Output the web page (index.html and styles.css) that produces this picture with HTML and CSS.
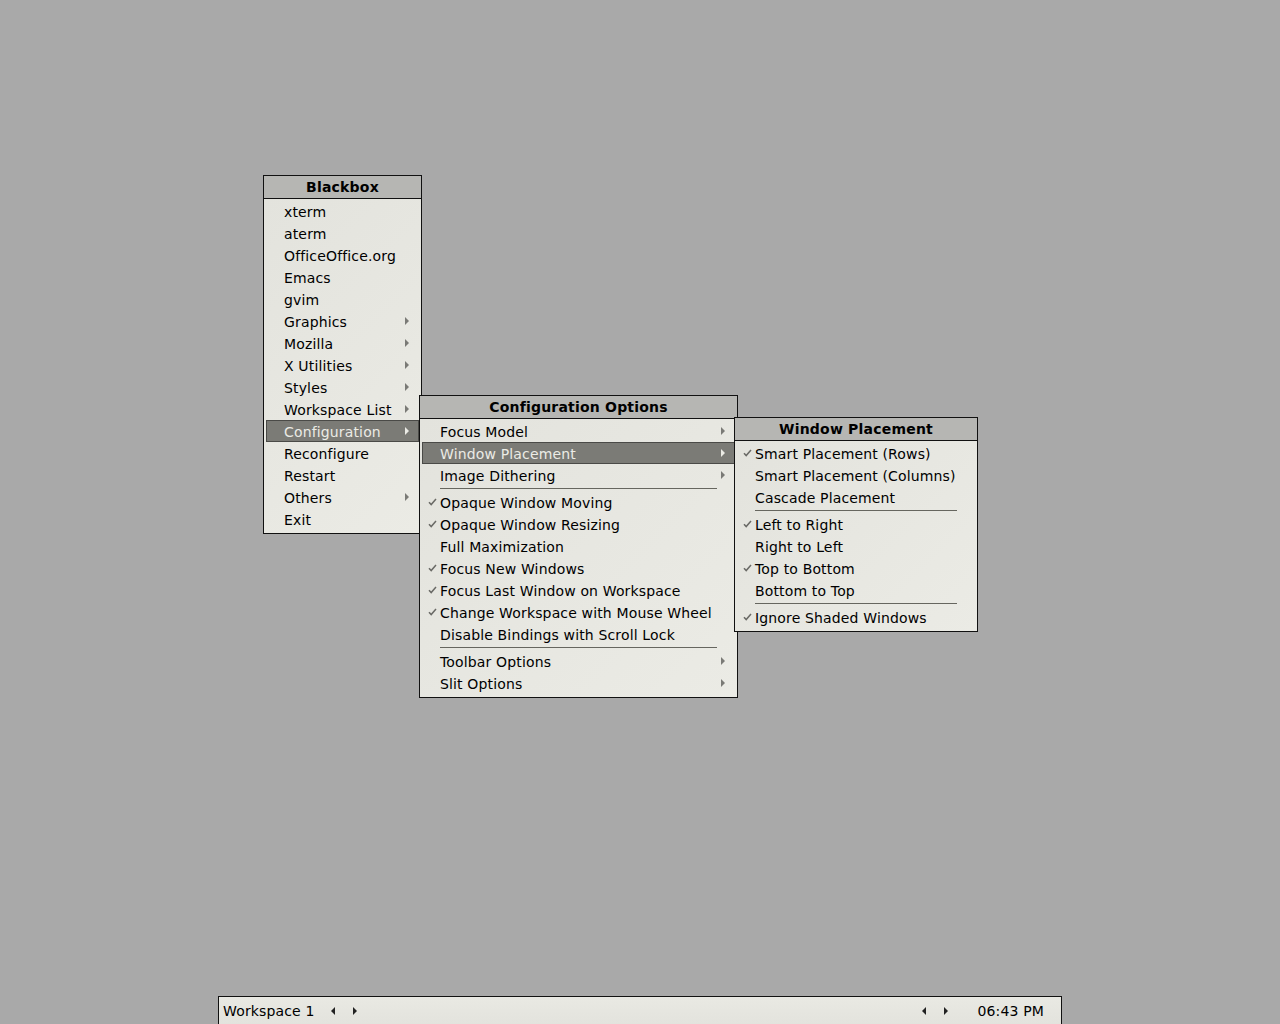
FILE: index.html
```html
<!DOCTYPE html>
<html>
<head>
<meta charset="utf-8">
<link rel="stylesheet" href="styles.css">
</head>
<body>
<div class="desktop">
  <div class="menu menu-root">
    <div class="menu-title">Blackbox</div>
    <div class="menu-body">
      <div class="item"><span class="label">xterm</span></div>
      <div class="item"><span class="label">aterm</span></div>
      <div class="item"><span class="label">OfficeOffice.org</span></div>
      <div class="item"><span class="label">Emacs</span></div>
      <div class="item"><span class="label">gvim</span></div>
      <div class="item sub"><span class="label">Graphics</span><span class="arrow"></span></div>
      <div class="item sub"><span class="label">Mozilla</span><span class="arrow"></span></div>
      <div class="item sub"><span class="label">X Utilities</span><span class="arrow"></span></div>
      <div class="item sub"><span class="label">Styles</span><span class="arrow"></span></div>
      <div class="item sub"><span class="label">Workspace List</span><span class="arrow"></span></div>
      <div class="item sub active"><span class="label">Configuration</span><span class="arrow"></span></div>
      <div class="item"><span class="label">Reconfigure</span></div>
      <div class="item"><span class="label">Restart</span></div>
      <div class="item sub"><span class="label">Others</span><span class="arrow"></span></div>
      <div class="item"><span class="label">Exit</span></div>
    </div>
  </div>

  <div class="menu menu-config">
    <div class="menu-title">Configuration Options</div>
    <div class="menu-body">
      <div class="item sub"><span class="label">Focus Model</span><span class="arrow"></span></div>
      <div class="item sub active"><span class="label">Window Placement</span><span class="arrow"></span></div>
      <div class="item sub"><span class="label">Image Dithering</span><span class="arrow"></span></div>
      <div class="sep"></div>
      <div class="item checked"><span class="check"><svg width="9" height="8" viewBox="0 0 9 8"><path d="M1 4.2 L3.2 6.6 L8 1" fill="none" stroke="#6a6a66" stroke-width="1.5"/></svg></span><span class="label">Opaque Window Moving</span></div>
      <div class="item checked"><span class="check"><svg width="9" height="8" viewBox="0 0 9 8"><path d="M1 4.2 L3.2 6.6 L8 1" fill="none" stroke="#6a6a66" stroke-width="1.5"/></svg></span><span class="label">Opaque Window Resizing</span></div>
      <div class="item"><span class="label">Full Maximization</span></div>
      <div class="item checked"><span class="check"><svg width="9" height="8" viewBox="0 0 9 8"><path d="M1 4.2 L3.2 6.6 L8 1" fill="none" stroke="#6a6a66" stroke-width="1.5"/></svg></span><span class="label">Focus New Windows</span></div>
      <div class="item checked"><span class="check"><svg width="9" height="8" viewBox="0 0 9 8"><path d="M1 4.2 L3.2 6.6 L8 1" fill="none" stroke="#6a6a66" stroke-width="1.5"/></svg></span><span class="label">Focus Last Window on Workspace</span></div>
      <div class="item checked"><span class="check"><svg width="9" height="8" viewBox="0 0 9 8"><path d="M1 4.2 L3.2 6.6 L8 1" fill="none" stroke="#6a6a66" stroke-width="1.5"/></svg></span><span class="label">Change Workspace with Mouse Wheel</span></div>
      <div class="item"><span class="label">Disable Bindings with Scroll Lock</span></div>
      <div class="sep"></div>
      <div class="item sub"><span class="label">Toolbar Options</span><span class="arrow"></span></div>
      <div class="item sub"><span class="label">Slit Options</span><span class="arrow"></span></div>
    </div>
  </div>

  <div class="menu menu-placement">
    <div class="menu-title">Window Placement</div>
    <div class="menu-body">
      <div class="item checked"><span class="check"><svg width="9" height="8" viewBox="0 0 9 8"><path d="M1 4.2 L3.2 6.6 L8 1" fill="none" stroke="#6a6a66" stroke-width="1.5"/></svg></span><span class="label">Smart Placement (Rows)</span></div>
      <div class="item"><span class="label">Smart Placement (Columns)</span></div>
      <div class="item"><span class="label">Cascade Placement</span></div>
      <div class="sep"></div>
      <div class="item checked"><span class="check"><svg width="9" height="8" viewBox="0 0 9 8"><path d="M1 4.2 L3.2 6.6 L8 1" fill="none" stroke="#6a6a66" stroke-width="1.5"/></svg></span><span class="label">Left to Right</span></div>
      <div class="item"><span class="label">Right to Left</span></div>
      <div class="item checked"><span class="check"><svg width="9" height="8" viewBox="0 0 9 8"><path d="M1 4.2 L3.2 6.6 L8 1" fill="none" stroke="#6a6a66" stroke-width="1.5"/></svg></span><span class="label">Top to Bottom</span></div>
      <div class="item"><span class="label">Bottom to Top</span></div>
      <div class="sep"></div>
      <div class="item checked"><span class="check"><svg width="9" height="8" viewBox="0 0 9 8"><path d="M1 4.2 L3.2 6.6 L8 1" fill="none" stroke="#6a6a66" stroke-width="1.5"/></svg></span><span class="label">Ignore Shaded Windows</span></div>
    </div>
  </div>

  <div class="toolbar">
    <span class="ws-name">Workspace 1</span>
    <span class="tb-btn"><span class="tri-left"></span></span>
    <span class="tb-btn"><span class="tri-right"></span></span>
    <span class="tb-spacer"></span>
    <span class="tb-btn"><span class="tri-left"></span></span>
    <span class="tb-btn"><span class="tri-right"></span></span>
    <span class="clock">06:43 PM</span>
  </div>
</div>
</body>
</html>
```

FILE: styles.css
```css
html, body {
  margin: 0;
  padding: 0;
}

body {
  background: #a9a9a9;
  font-family: "DejaVu Sans", "Liberation Sans", sans-serif;
  font-size: 14px;
  letter-spacing: 0.15px;
  color: #000;
}

.desktop {
  position: relative;
  width: 1280px;
  height: 1024px;
  overflow: hidden;
}

.menu {
  position: absolute;
  box-sizing: border-box;
  border: 1px solid #111;
  background: #e7e7e1;
}

.menu-root { left: 263px; top: 175px; width: 159px; z-index: 1; }
.menu-config { left: 419px; top: 395px; width: 319px; z-index: 2; }
.menu-placement { left: 734px; top: 417px; width: 244px; z-index: 3; }

.menu-title {
  height: 22px;
  line-height: 23px;
  border-bottom: 1px solid #111;
  background: #b6b6b3;
  font-weight: bold;
  letter-spacing: 0.2px;
  text-align: center;
}

.menu-body {
  padding: 1px 2px 3px 2px;
  background: linear-gradient(135deg, #e3e3dd 0%, #ebebe5 100%);
}

.item {
  position: relative;
  display: flex;
  align-items: center;
  height: 22px;
  padding-left: 18px;
  padding-right: 10px;
  box-sizing: border-box;
  white-space: nowrap;
}

.item .label {
  flex: 1;
  line-height: 24px;
  height: 22px;
}

.item.active {
  background: #7b7b76;
  box-shadow: inset 0 0 0 1px #4a4a47;
  color: #ebebe5;
}

.check {
  position: absolute;
  left: 6px;
  top: 7px;
  width: 9px;
  height: 8px;
  line-height: 0;
}

.arrow {
  width: 0;
  height: 0;
  border-top: 4px solid transparent;
  border-bottom: 4px solid transparent;
  border-left: 4px solid #7a7a76;
}

.item.active .arrow {
  border-left-color: #ebebe5;
}

.sep {
  height: 1px;
  margin: 2px 18px 2px 18px;
  background: #66665f;
}

.toolbar {
  position: absolute;
  left: 218px;
  top: 996px;
  width: 844px;
  height: 28px;
  box-sizing: border-box;
  border: 1px solid #111;
  border-bottom: 0;
  background: linear-gradient(180deg, #e9e9e3 0%, #e3e3dd 100%);
  display: flex;
  align-items: center;
  padding-left: 4px;
  padding-right: 17px;
}

.ws-name {
  margin-right: 7px;
}

.tb-btn {
  width: 22px;
  height: 20px;
  display: flex;
  align-items: center;
  justify-content: center;
}

.tri-left {
  width: 0;
  height: 0;
  border-top: 4px solid transparent;
  border-bottom: 4px solid transparent;
  border-right: 4px solid #222;
}

.tri-right {
  width: 0;
  height: 0;
  border-top: 4px solid transparent;
  border-bottom: 4px solid transparent;
  border-left: 4px solid #222;
}

.tb-spacer {
  flex: 1;
}

.clock {
  margin-left: 20px;
}
```
